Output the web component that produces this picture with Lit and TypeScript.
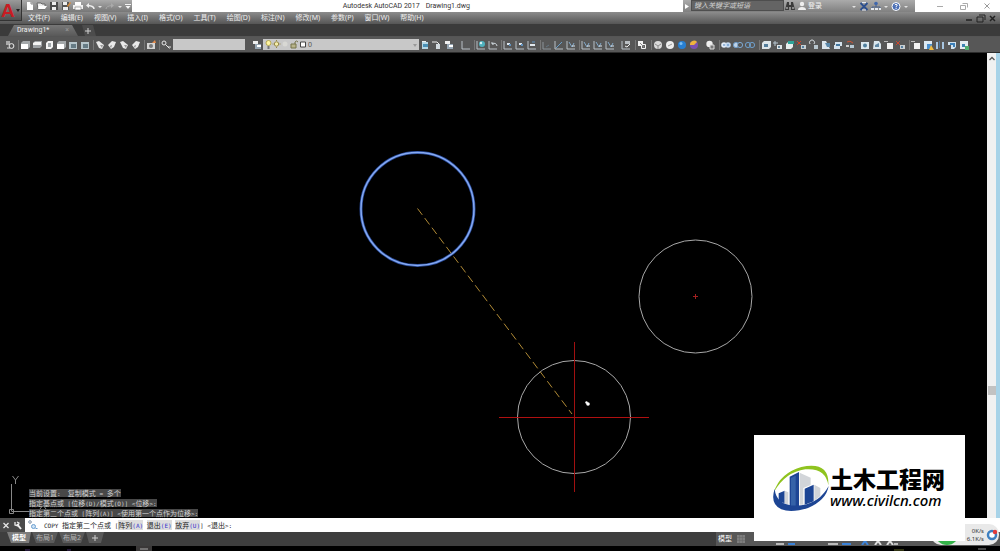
import { LitElement, html, svg, css, SVGTemplateResult } from "lit";
import { customElement, property } from "lit/decorators.js";

type Glyph = SVGTemplateResult;

const axis = svg`<path d="M2 2v8h8" fill="none" stroke="#b9c0c6"/>`;

const glyphs: Record<string, Glyph> = {
  find: svg`<path d="M2 2h4v4H2z" fill="#aaa"/><circle cx="7.5" cy="7" r="2.4" fill="#555" stroke="#eee"/><path d="M3 9h3" stroke="#ddd"/>`,
  cubeTop: svg`<path d="M2 4l2-2h7v6l-2 2H2z" fill="#a4a8aa"/><path d="M2 5h7v5H2z" fill="#fff"/>`,
  cubeFlat: svg`<path d="M2 4l2-2h7v5l-2 2H2z" fill="#a0a4a7"/><path d="M2 4l2-1h6v3H2z" fill="#f4f4f4"/>`,
  cubeLeft: svg`<path d="M3 4l2-2h5v6l-2 2H3z" fill="#f3f3f3"/><path d="M5 4h3v4H5z" fill="#a0a6aa"/>`,
  cubeBlue: svg`<path d="M2 3h8v7H2z" fill="#b6c5cb"/><path d="M4 5h5v4H4z" fill="#667b85"/>`,
  isoA: svg`<path d="M2 3l3-1 5 4-2 4-3-1z" fill="#e9e9e9"/><path d="M6 6l3 0-1 3z" fill="#999"/>`,
  isoB: svg`<path d="M10 3l-4-1-4 4 3 4 3-2z" fill="#e9e9e9"/><path d="M6 6l-2 1 1 2z" fill="#888"/>`,
  camera: svg`<path d="M2 4h8v6H2z" fill="#d5d5d5"/><circle cx="6" cy="7" r="2" fill="#777"/><path d="M7 4l3-3 1 3z" fill="#e48a4a"/>`,
  key: svg`<circle cx="4" cy="4" r="2" fill="none" stroke="#e5e5e5"/><path d="M5.500 5.500l4 4M8 8h3" stroke="#e5e5e5"/>`,
  layers: svg`<path d="M2 2h5v3H2z" fill="#eee"/><path d="M4 5h6v5H4z" fill="#96a5b2"/><path d="M6 6h4v2H6z" fill="#fff"/>`,
  layerBlue: svg`<path d="M3 3h6v7H3z" fill="#b5d7e6"/><path d="M4 5h5v3H4z" fill="#4a90b5"/><path d="M3 2h4v1H3z" fill="#eee"/>`,
  layerBack: svg`<path d="M1 3h5l2 2" fill="none" stroke="#eee"/><path d="M5 5h4v5H5z" fill="#d3dbe0"/>`,
  axis,
  axisGlobe: svg`${axis}<circle cx="7" cy="5" r="3" fill="#4fb0bd"/><circle cx="6" cy="4" r="1.200" fill="#d7f0f2"/>`,
  axisBack: svg`${axis}<path d="M5 5a3 3 0 0 1 5 2M5 3v2h2" fill="none" stroke="#cfd8de"/>`,
  axisDot: svg`${axis}<path d="M5 4h3v2H5z" fill="#dfe8f0"/><path d="M7 5h2v2H7z" fill="#5f91bd"/>`,
  axisFace: svg`${axis}<path d="M4 5h5v2H4z" fill="#e1e7ec"/><path d="M6 3h3" stroke="#5f91bd"/>`,
  axisThin: svg`<path d="M2 3v7h8" fill="none" stroke="#8c949a"/><path d="M5 8l3-2" stroke="#667784"/>`,
  axisRay: svg`${axis}<path d="M3 9l6-6" stroke="#6a9fca"/>`,
  axisTurn: svg`${axis}<path d="M4 3l3 5 2-4" fill="none" stroke="#82a9ca"/><path d="M7 7h3" stroke="#dce5ec"/>`,
  axisApply: svg`${axis}<path d="M5 2h5v3H5z" fill="#b9bec2"/><path d="M5 7l2 1 3-3" fill="none" stroke="#eee"/>`,
  wire: svg`<path d="M2 2h5v5H2z" fill="#f2f2f2"/><path d="M5.500 5.500h4v4h-4z" fill="#666" stroke="#f2f2f2"/><path d="M4 4l4 4" stroke="#888"/>`,
  ball: svg`<circle cx="6" cy="6" r="4" fill="#dadada"/><path d="M3 5l3 2 3-2M6 7v3" fill="none" stroke="#8a8a8a"/>`,
  ballPlain: svg`<circle cx="6" cy="6" r="4" fill="#eee"/><path d="M4 7l4-2" stroke="#999"/>`,
  ballBlue: svg`<circle cx="6" cy="6" r="4" fill="#277fd2"/><circle cx="5" cy="4.500" r="1.500" fill="#79bdf4"/>`,
  ballHot: svg`<circle cx="6" cy="6" r="4" fill="#7a50b0"/><path d="M2 6a4 4 0 0 1 7-3L6 6z" fill="#eeb43c"/>`,
  manage: svg`<circle cx="5.500" cy="5" r="3.200" fill="#eee"/><path d="M6 6h4v4H6z" fill="#777" stroke="#ddd"/>`,
  union: svg`<circle cx="4" cy="6" r="2.800" fill="#e4edf8"/><circle cx="8" cy="6" r="2.800" fill="#c3d8ef"/><path d="M3 6h2M7 6h2" stroke="#4c82bd"/>`,
  subtract: svg`<circle cx="4" cy="6" r="2.600" fill="#bed2e7" stroke="#6d9bc8"/><circle cx="8" cy="6" r="2.600" fill="#555" stroke="#7ea9d2"/>`,
  intersect: svg`<circle cx="4" cy="6" r="2.600" fill="none" stroke="#6f9fcb"/><circle cx="8" cy="6" r="2.600" fill="none" stroke="#6f9fcb"/>`,
  extrude: svg`<path d="M2 4l2-2h7v6l-2 2H2z" fill="#dce5ea"/><path d="M4 5h4v3H4z" fill="#527d9c"/>`,
  moveFace: svg`<path d="M1 4h5M3 2v5" stroke="#b9c8d2"/><path d="M5 6h5v4H5z" fill="#dfe5e8"/><path d="M6 7h2v2H6z" fill="#66859a"/>`,
  offset: svg`<path d="M2 5l2-2h5v5L7 10H2z" fill="#e8eeee"/><path d="M4 2h6v3H4z" fill="#2fa49a"/>`,
  remove: svg`<path d="M1 2l4 4M5 2L1 6" stroke="#c8472f"/><path d="M5 6h5v4H5z" fill="#c7ced2"/><path d="M6 7h2v2H6z" fill="#567fa0"/>`,
  rotate: svg`<path d="M2 5a2.500 2.500 0 1 1 4 0" fill="none" stroke="#d6dde1"/><path d="M6 6h4v4H6z" fill="#b7c5cd"/>`,
  taper: svg`<path d="M2 2h4l4 8H2z" fill="#dbe6ee"/><path d="M5 4h5v4H7z" fill="#5b88aa"/>`,
  copyFace: svg`<path d="M3 3h7v4H8v3H2V6h1z" fill="#d5e2ec"/><path d="M4 5h4v2H4z" fill="#44779f"/>`,
  color: svg`<path d="M3 3q3-2 6 1" fill="none" stroke="#cf5233"/><path d="M2 6h3v2H2z" fill="#ccc"/><path d="M6 6h4v3H6z" fill="#b8cbd6"/>`,
  imprint: svg`<path d="M2 3h8v7H2z" fill="#dce8ef"/><circle cx="6" cy="6.500" r="2" fill="#4f7f9e"/>`,
  clean: svg`<path d="M3 2h5l2 3v5H2z" fill="#d9e5ec"/><path d="M4 6l4-2v4H4z" fill="#5e87a5"/>`,
  shell: svg`<path d="M1 2h4v1H1z" fill="#bbb"/><path d="M4 4h6v6H4z" fill="#f1f1f1"/>`,
  check: svg`<path d="M2 2h8v8H2z" fill="#dce9f3"/><path d="M5 5h5v5H5z" fill="#4a90d0"/><path d="M9 6l3 5H7z" fill="#f0b83b"/>`,
  pillars: svg`<path d="M2 3h2v7H2zM8 3h2v7H8z" fill="#a7c5e0"/><path d="M5 2h1v7H5z" fill="#4f7698"/>`,
  solid: svg`<path d="M2 3h8v5L8 10H5V6H2z" fill="#d1e2ef"/><path d="M4 4h5v4H7V6H4z" fill="#3c7fb8"/>`,
  render: svg`<path d="M2 2h8v8H2z" fill="#e3eef2"/><path d="M4 5h3v3H4z" fill="#3e86b5"/><path d="M7 7h4v4H7z" fill="#50b070"/>`,
  fileNew: svg`<path d="M3 2h4l2 2v6H3z" fill="#fff"/><path d="M7 2v2h2" fill="none" stroke="#888"/>`,
  open: svg`<path d="M1 3h4l1 1h3v5H2z" fill="#eee" stroke="#666"/><path d="M3 6h8L9 9H2z" fill="#fff"/>`,
  save: svg`<path d="M2 2h8v8H2z" fill="#4b4b4b"/><path d="M4 2h4v3H4zM4 7h4v3H4z" fill="#eee"/>`,
  saveAs: svg`<path d="M2 2h7v8H2z" fill="#555"/><path d="M3 2h4v3H3zM3 7h5v3H3z" fill="#eee"/><path d="M7 6l3-4 1 1-3 4z" fill="#d98a35"/>`,
  print: svg`<path d="M3 2h6v3H3z" fill="#fff"/><path d="M1 5h10v4H1z" fill="#f1f1f1"/><path d="M3 7h6v3H3z" fill="#fff" stroke="#777" stroke-width=".6"/>`,
  undo: svg`<path d="M10 9q0-3-6-3.500" fill="none" stroke="#eee" stroke-width="1.500"/><path d="M5 3v5L2 5.500z" fill="#eee"/>`,
  redo: svg`<path d="M2 9q0-3 6-3.500" fill="none" stroke="#aaa"/><path d="M7 3v5l3-2.500z" fill="#aaa"/>`,
  down: svg`<path d="M4 6h4L6 8z" fill="#e2e2e2"/>`,
  more: svg`<path d="M3 4h6v1H3zM3.500 6h5L6 9z" fill="#f4f4f4"/>`,
  right: svg`<path d="M4 4l4 2.500L4 9z" fill="#fff"/>`,
  up: svg`<path d="M3.500 7L6 4.500 8.500 7" fill="none" stroke="#555" stroke-width="1.300"/>`,
  binoculars: svg`<path d="M3 2h2v3h2V2h2l2 8H7V7H5v3H1z" fill="#3b3b3b"/><path d="M3 7v2M9 7v2" stroke="#d7d7d7"/>`,
  user: svg`<circle cx="6" cy="4" r="2.200" fill="#eee"/><path d="M2 10q0-3 4-3t4 3z" fill="#eee"/>`,
  exchange: svg`<path d="M2.500 3l7 7M9.500 3l-7 7" stroke="#2d4f8f" stroke-width="1.800"/><path d="M4 2.500h4M4 10h4" stroke="#e2e8f4"/>`,
  network: svg`<circle cx="6" cy="3.500" r="1.800" fill="#3e66ad"/><path d="M6 5v2M2 9V7h8v2" fill="none" stroke="#46618e"/><path d="M1 8h3v2H1zM5 8h3v2H5zM9 8h2v2H9z" fill="#e5e9ef"/>`,
  help: svg`<circle cx="6" cy="6.500" r="4" fill="#4a6eb5" stroke="#fff"/><path d="M4.800 5q1.200-1.500 2.300-.200.500 1-1 1.800v.700M6.100 8v1" fill="none" stroke="#fff"/>`,
  minimize: svg`<path d="M3 6.500h6" stroke="#aaa"/>`,
  restore: svg`<path d="M4.500 3.500h5v4M2.500 5.500h5v4h-5z" fill="none" stroke="#aaa"/>`,
  close: svg`<path d="M3.500 3.500l5 5M8.500 3.500l-5 5" stroke="#999"/>`,
  minDark: svg`<path d="M3 8h6" stroke="#222" stroke-width="1.500"/>`,
  restoreDark: svg`<path d="M4 3h6v5M2 5h6v5H2z" fill="none" stroke="#222"/>`,
  closeDark: svg`<path d="M3 4l5 5M8 4L3 9" stroke="#222" stroke-width="1.500"/>`,
  closeLight: svg`<path d="M3.500 4l5 5M8.500 4l-5 5" stroke="#e6e6e6" stroke-width="1.300"/>`,
  wrench: svg`<path d="M5 5l4 5" stroke="#f2f2f2" stroke-width="2"/><path d="M3 3v3l3 1 1-3-2-1" fill="none" stroke="#eee" stroke-width="1.300"/>`,
  copy: svg`<circle cx="3" cy="3" r="1.300" fill="none" stroke="#8294a8"/><circle cx="6.500" cy="7.500" r="2" fill="#cfe4f7" stroke="#6b9fcf"/><path d="M8.500 9.500h2" stroke="#6b9fcf"/>`,
  plus: svg`<path d="M6 3v6M3 6h6" stroke="#d0d0d0"/>`,
  grid: svg`<path d="M2 2h8v8H2z" fill="#7e7e7e"/><path d="M2 4.500h8M2 7.500h8M4.500 2v8M7.500 2v8" stroke="#666" stroke-width=".5"/>`,
};

@customElement("cad-icon")
class CadIcon extends LitElement {
  @property() name = "";
  static styles = css`
    :host { display: block; width: 12px; height: 12px; }
    svg { display: block; }
  `;
  render() {
    return html`<svg width="12" height="12" viewBox="0 0 12 12" aria-hidden="true">${glyphs[this.name]}</svg>`;
  }
}

const menus = ["文件(F)", "编辑(E)", "视图(V)", "插入(I)", "格式(O)", "工具(T)", "绘图(D)", "标注(N)", "修改(M)", "参数(P)", "窗口(W)", "帮助(H)"];

const viewTools = [
  ["find"],
  ["cubeTop", "cubeFlat", "cubeLeft", "cubeTop", "cubeBlue", "cubeBlue"],
  ["isoA", "isoB", "isoA", "isoB"],
  ["camera"],
  ["key"],
];
const ucsTools = [
  ["axis"],
  ["axisGlobe", "axisBack"],
  ["axisDot", "axisDot", "axisFace"],
  ["axisThin", "axisRay", "axisTurn"],
  ["axisTurn", "axisTurn", "axisTurn"],
];
const solidTools = [
  ["axisApply"],
  ["wire"],
  ["ball", "ballPlain", "ballBlue", "ballHot"],
];
const editTools = [
  ["union", "subtract", "intersect"],
  ["extrude", "moveFace", "offset", "remove", "rotate", "taper", "copyFace", "color"],
];
const bodyTools = [
  ["imprint", "clean", "shell", "remove"],
  ["shell", "check", "pillars", "solid", "render"],
];

const button = (name: string) => html`<button class="icon" aria-label=${name}><cad-icon name=${name}></cad-icon></button>`;
const group = (names: string[]) => html`<div class="group">${names.map(button)}</div>`;

/* Half-width characters are set smaller so that they take half a CJK cell. */
const cells = (text: string) =>
  text.split(/([ -~]+)/).map((part) => (/^[ -~]/.test(part) ? html`<span class="half">${part}</span>` : part));

@customElement("app-root")
class AppRoot extends LitElement {
  static styles = css`
    :host {
      display: grid;
      grid-template-rows: 12px 12px 13px 16px minmax(0, 1fr) 14px 14px 5px;
      position: relative;
      height: 100vh;
      overflow: hidden;
      background: #000;
      color: #eee;
      font: 7px/12px "Noto Sans", "Noto Sans CJK SC", sans-serif;
    }
    button, select, input {
      font: inherit;
      color: inherit;
      border: 0;
      margin: 0;
      padding: 0;
      background: none;
      border-radius: 0;
      appearance: none;
      outline: none;
    }
    .icon { display: block; flex: none; width: 12px; height: 12px; }
    .row { display: flex; align-items: center; min-width: 0; }
    .group { display: flex; flex: none; }

    .title { background: #fff; color: #333; justify-content: space-between; }
    .quick { display: flex; box-sizing: border-box; width: 132px; height: 12px; padding-left: 24px; background: linear-gradient(#aaa, #777); }
    .quick .narrow { width: 8px; overflow: hidden; }
    .quick .narrow cad-icon { margin-left: -2px; }
    .caption { flex: 1; display: flex; justify-content: flex-end; gap: 6px; padding-right: 213px; white-space: pre; font-family: Roboto, sans-serif; }
    .info { display: flex; box-sizing: border-box; width: 232px; height: 12px; background: linear-gradient(#aaa, #808080); }
    .info .narrow { width: 8px; overflow: hidden; }
    .info .narrow cad-icon { margin-left: -2px; }
    .search { width: 93px; height: 11px; box-sizing: border-box; padding-left: 2px; background: #646464; border: 1px solid #4e4e4e; color: #ddd; font-style: italic; }
    .search::placeholder { color: #d2d2d2; opacity: 1; }
    .login { color: #f2f2f2; width: 42px; text-align: left; }
    .window { display: flex; justify-content: space-between; width: 85px; box-sizing: border-box; padding: 0 7px 0 19px; }

    .menu { background: linear-gradient(#8c8c8c, #565656); padding-left: 28px; }
    .menu nav { display: flex; gap: 11px; flex: 1; }
    .menu a { color: #eee; text-decoration: none; white-space: nowrap; }
    .menu .group { padding-right: 1px; }

    .tabs { background: #3b3b3b; align-items: flex-end; padding-left: 8px; border-bottom: 1px solid #555; gap: 4px; }
    .tab { display: flex; justify-content: space-between; width: 70px; height: 11px; padding: 0 9px 0 9px; box-sizing: border-box; font-family: Roboto, sans-serif; line-height: 11px; background: linear-gradient(#777, #595959); clip-path: polygon(0 100%, 6px 0, 64px 0, 100% 100%); color: #eee; }
    .tab span { color: #999; }
    .add { width: 14px; height: 11px; background: #4c4c4c; clip-path: polygon(0 0, 11px 0, 100% 100%, 3px 100%); }

    .tools { background: #575757; padding-left: 4px; box-sizing: border-box; border-bottom: 1px solid #2c2c2c; }
    .set { display: flex; gap: 3px; }
    .set .group + .group { box-shadow: -2px 0 0 -1px #777; }
    .wide { gap: 4px; margin-left: 4px; }
    .style { width: 72px; height: 11px; margin: 0 6px 0 1px; background: #c8c8c8; }
    .layer { display: flex; align-items: center; flex: none; width: 156px; height: 11px; background: #c8c8c8; color: #555; }
    .layer select { flex: 1; height: 11px; }
    .layer svg { flex: none; }
    .arrow { width: 8px; height: 8px; }
    .gap { margin-left: 5px; }
    .body { margin-left: 3px; }

    .view { position: relative; display: flex; justify-content: space-between; align-items: stretch; background: #000; }
    .drawing { display: block; flex: 1; min-width: 0; height: 100%; }
    .scroll { display: flex; flex-direction: column; align-items: center; width: 9px; border-right: 4px solid #a8d3e8; background: #f1f1f1; }
    .scroll .grow { flex: 323; }
    .scroll .rest { flex: 124; }
    .scroll i { display: block; width: 8px; height: 9px; background: #c2c2c2; }
    .history { position: absolute; left: 29px; bottom: 1px; display: flex; flex-direction: column; align-items: flex-start; gap: 2px; }
    .cmd { font: 7px/10px "Noto Sans CJK SC", sans-serif; white-space: pre; }
    .half { font-family: "DejaVu Sans Mono", monospace; font-size: 6px; }
    .history p { margin: 0; height: 8px; line-height: 8px; background: #484848; color: #d0d0d0; }

    .command { background: #fff; color: #222; }
    .handles { display: flex; align-items: center; gap: 0; width: 25px; height: 14px; background: #4a4a4a; }
    .command > .icon { margin-left: 2px; }
    .command label { padding-left: 5px; }
    .command b { font-weight: 400; background: #ddd; color: #222; }
    .command u { text-decoration: none; color: #33c; }
    .command input { flex: 1; height: 12px; }

    .status { background: #3e3e3e; justify-content: space-between; }
    .layouts { display: flex; align-items: flex-start; height: 100%; padding-left: 7px; gap: 1px; }
    .layouts button { width: 26px; height: 11px; line-height: 11px; background: #5a5a5a; color: #b6b6b6; clip-path: polygon(0 0, 100% 0, 22px 100%, 4px 100%); }
    .layouts .on { width: 24px; background: #7d7d7d; color: #fff; font-weight: 700; }
    .layouts .plus { display: flex; justify-content: center; width: 18px; clip-path: polygon(0 0, 100% 0, 15px 100%, 3px 100%); }
    .modes { display: flex; align-items: center; height: 14px; width: 284px; background: #575757; box-sizing: border-box; padding-left: 2px; gap: 3px; color: #fff; }
    .modes svg { margin-left: 8px; }
    .dock { background: #000; }
    .dock svg { display: block; width: 100%; height: 5px; }

    .logo { position: absolute; left: 0; top: 0; display: flex; align-items: center; width: 22px; height: 21px; padding-left: 1px; box-sizing: border-box; background: linear-gradient(#9a9a9a, #4f4f4f); border-right: 1px solid #333; border-bottom: 1px solid #333; color: #c81c22; font: 700 19px/19px "Liberation Sans", sans-serif; }
    .logo svg { flex: none; }

    .meter { position: absolute; right: 1px; bottom: 6px; display: flex; align-items: center; justify-content: flex-end; gap: 2px; width: 68px; height: 21px; border-radius: 10px; background: #e9e9e9; color: #333; overflow: hidden; }
    .meter div { text-align: right; font-size: 6px; line-height: 8px; }
    .green { position: absolute; left: 4px; top: 0; }
    .mark { position: absolute; right: 35px; bottom: 10px; display: flex; align-items: center; width: 211px; height: 106px; box-sizing: border-box; padding-left: 18px; background: #fff; color: #000; }
    .mark svg { flex: none; }
    .mark strong { display: block; font: 900 23px/24px "Liberation Sans", "Noto Sans CJK SC", sans-serif; white-space: nowrap; }
    .mark em { display: block; font: italic 500 15px/16px "Noto Sans", sans-serif; white-space: nowrap; }
  `;

  private drawing() {
    return html`<svg class="drawing" role="img" aria-label="Model space">
      <g fill="none">
        <circle cx="417.500" cy="156" r="56.500" stroke="#2a4c9c" stroke-width="3"/>
        <circle cx="417.500" cy="156" r="56.500" stroke="#86aaf2" stroke-width="1.500"/>
        <circle cx="695.500" cy="243.500" r="56.500" stroke="#a8a8a8"/>
        <circle cx="574" cy="364" r="56.500" stroke="#a8a8a8"/>
        <path d="M417.500 155.500L572 361" stroke="#b08a35" stroke-dasharray="8 4"/>
        <path d="M693 243.500h5M695.500 241v5" stroke="#a32020"/>
        <path d="M11.500 431v27M11.500 458.500h30M9.500 456.500h4v4h-4zM12.500 423l3 4 3-4M15.500 427v4" stroke="#888"/>
        <path d="M40 448l6 8M46 448l-6 8" stroke="#888"/>
      </g>
      <rect x="499" y="364" width="150" height="1" fill="#b01010"/>
      <rect x="574" y="289" width="1" height="150" fill="#a01010"/>
      <circle cx="586.500" cy="349.500" r="1.200" fill="#fff"/><circle cx="588" cy="351" r="1.800" fill="#fff"/>
    </svg>`;
  }

  render() {
    return html`
      <header class="row title">
        <div class="quick">
          ${["fileNew", "open", "save", "saveAs", "print", "undo"].map(button)}
          <button class="icon narrow" aria-label="Undo list"><cad-icon name="down"></cad-icon></button>
          ${button("redo")}
          <button class="icon narrow" aria-label="Redo list"><cad-icon name="down"></cad-icon></button>
          <button class="icon narrow" aria-label="Customize"><cad-icon name="more"></cad-icon></button>
        </div>
        <div class="caption"><span>Autodesk AutoCAD 2017</span><span>Drawing1.dwg</span></div>
        <div class="info">
          <button class="icon narrow" aria-label="Collapse"><cad-icon name="right"></cad-icon></button>
          <input class="search" aria-label="搜索" placeholder="键入关键字或短语">
          ${button("binoculars")}${button("user")}
          <button class="login">登录</button>
          <button class="icon narrow" aria-label="Account"><cad-icon name="down"></cad-icon></button>
          ${button("exchange")}${button("network")}
          <button class="icon narrow" aria-label="Apps"><cad-icon name="down"></cad-icon></button>
          ${button("help")}
          <button class="icon narrow" aria-label="Help list"><cad-icon name="down"></cad-icon></button>
        </div>
        <div class="window">${["minimize", "restore", "close"].map(button)}</div>
      </header>

      <div class="row menu">
        <nav>${menus.map((m) => html`<a href="#">${m}</a>`)}</nav>
        ${group(["minDark", "restoreDark", "closeDark"])}
      </div>

      <div class="row tabs">
        <button class="tab">Drawing1*<span>×</span></button>
        <button class="add" aria-label="New tab"><cad-icon name="plus"></cad-icon></button>
      </div>

      <div class="row tools">
        <div class="set">${viewTools.map(group)}</div>
        <select class="style" aria-label="View"><option></option></select>
        ${group(["layers"])}
        <div class="layer">
          <svg width="45" height="11" viewBox="0 0 45 11">
            <circle cx="5.500" cy="4" r="2.500" fill="#fff5a0" stroke="#aa9a3a" stroke-width=".8"/><path d="M5.500 7v3" stroke="#777" stroke-width="2"/>
            <circle cx="13.500" cy="5" r="2.200" fill="#f4edaa" stroke="#96884a"/><path d="M13.500 1v1M13.500 8v1M9.500 5h1M16.500 5h1" stroke="#96884a"/>
            <circle cx="22" cy="5" r="2.500" fill="#d8d8d4"/>
            <path d="M28 5h5v4h-5z" fill="#b8b48a" stroke="#77744a"/><path d="M32 5V3q1.500-2 3 0" fill="none" stroke="#77744a"/>
            <path d="M37.500 3h5v5h-5z" fill="#fff" stroke="#444"/>
          </svg>
          <select aria-label="Layer"><option>0</option></select>
          <svg class="arrow" viewBox="0 0 8 8"><path d="M2 3h4L4 6z" fill="#999"/></svg>
        </div>
        ${group(["layerBlue", "layerBack", "layers"])}
        <div class="set gap">${ucsTools.map(group)}</div>
        <div class="set wide">${solidTools.map(group)}</div>
        <div class="set wide">${group(["manage"])}${editTools.map(group)}</div>
        <div class="set body">${bodyTools.map(group)}</div>
      </div>

      <main class="view">
        ${this.drawing()}
        <div class="scroll">
          <cad-icon name="up"></cad-icon>
          <div class="grow"></div><i></i><div class="rest"></div>
        </div>
        <div class="history cmd">
          <p>${cells("当前设置:  复制模式 = 多个")}</p>
          <p>${cells("指定基点或 [位移(D)/模式(O)] <位移>:")}</p>
          <p>${cells("指定第二个点或 [阵列(A)] <使用第一个点作为位移>:")}</p>
        </div>
      </main>

      <div class="row command">
        <div class="handles">${button("closeLight")}${button("wrench")}</div>
        ${button("copy")}
        <label class="cmd" for="entry">${cells("COPY 指定第二个点或 [")}<b>阵列<u>${cells("(A)")}</u></b>${cells(" ")}<b>退出<u>${cells("(E)")}</u></b>${cells(" ")}<b>放弃<u>${cells("(U)")}</u></b>${cells("] <退出>:")}</label>
        <input id="entry">
      </div>

      <footer class="row status">
        <div class="layouts">
          <button class="on">模型</button><button>布局1</button><button>布局2</button>
          <button class="plus" aria-label="New layout"><cad-icon name="plus"></cad-icon></button>
        </div>
        <div class="modes">
          <button>模型</button>${button("grid")}
          <svg width="170" height="12" viewBox="0 0 170 12">
            <path d="M18 11h8M70 11h10M136 11h4" stroke="#bbb" stroke-width="2"/>
            <path d="M30 11h7M84 11h9" stroke="#3b82d8" stroke-width="2"/>
            <path d="M104 12l3-4 3 4" fill="none" stroke="#3b82d8" stroke-width="2"/>
            <path d="M117 12l3-4 3 4M129 12l3-4 3 4" fill="none" stroke="#ddd" stroke-width="2"/>
          </svg>
        </div>
      </footer>
      <div class="dock"><svg><path d="M136 0h16v5h-16z" fill="#3a3838"/><path d="M140 3h8" stroke="#aaa"/><path d="M25 4h5M67 4h4" stroke="#49306e"/><path d="M894 4h10" stroke="#656b28"/><path d="M978 3h8" stroke="#888"/></svg></div>

      <button class="logo" aria-label="Application menu">A<svg width="6" height="6" viewBox="0 0 6 6"><path d="M1 2h4L3 5z" fill="#222"/></svg></button>

      <aside class="meter">
        <svg class="green" width="24" height="21"><circle cx="12" cy="9" r="12" fill="#35b34a"/></svg>
        <div>0K/s<br>6.1K/s</div>
        <svg width="13" height="14" viewBox="0 0 13 14"><circle cx="6" cy="7" r="4" fill="#fff" stroke="#3d7fc1" stroke-width="2.500"/><circle cx="9" cy="4" r="2.200" fill="#e23b3b"/></svg>
      </aside>
      <aside class="mark">
        <svg width="58" height="48" viewBox="22 24 174 144">
          <path d="M42 112l18-8v38l-18-6zM75 62l28-14v104H75zM120 98l27-12v50l-27 10z" fill="#1d4594"/>
          <path d="M79 66l14-7v92H79z" fill="#3562a8"/>
          <path d="M60 104l11 5v38l-11-5zM105 50l33 15v22l-22 9v50h-11zM149 86l18 10v24l-18 14z" fill="#d2d5d9"/>
          <path d="M28 108Q45 52 110 33Q195 15 191 88Q183 35 122 40Q62 48 28 108z" fill="#8fc31f"/>
          <path d="M30 98Q15 145 50 160Q80 172 130 156Q185 132 192 90Q165 140 110 148Q35 155 30 98z" fill="#1d4594"/>
        </svg>
        <div><strong>土木工程网</strong><em>www.civilcn.com</em></div>
      </aside>
    `;
  }
}
